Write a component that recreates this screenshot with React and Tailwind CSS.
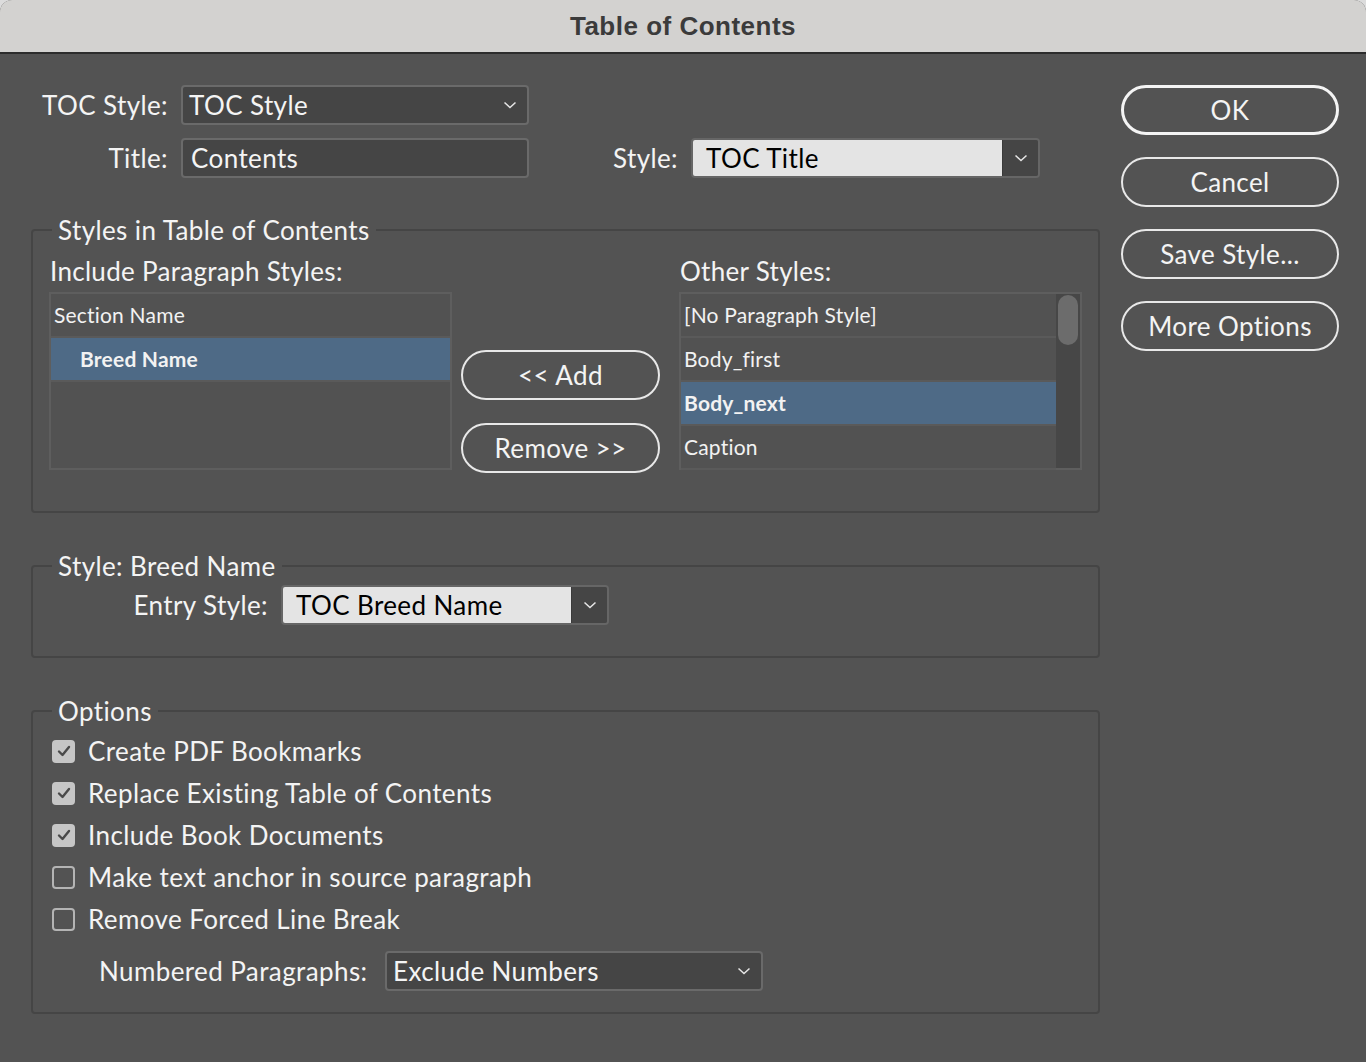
import React from 'react';

const Chevron = ({ className = '' }) => (
    <svg width="14" height="8" viewBox="0 0 14 8" className={className}>
        <polyline points="1.5,1.5 7,6.5 12.5,1.5" fill="none" stroke="#e6e6e6" strokeWidth="1.5" />
    </svg>
);

const DarkSelect = ({ value, width }) => (
    <div className={`${width} h-[40px] flex items-center justify-between rounded-[4px] border-2 border-[#6a6a6a] bg-[#454545] pl-[6px] pr-[10px]`}>
        <span className="text-[26px] tracking-[0.4px] text-[#f4f4f4]">{value}</span>
        <Chevron />
    </div>
);

const LightSelect = ({ value, width }) => (
    <div className={`${width} h-[40px] flex rounded-[4px] border-2 border-[#666] overflow-hidden`}>
        <div className="flex-1 flex items-center bg-[#e4e4e4] pl-[13px] text-[26px] tracking-[0.4px] text-black">{value}</div>
        <div className="w-[36px] flex items-center justify-center bg-[#454545] border-l border-[#3a3a3a]">
            <Chevron />
        </div>
    </div>
);

const PillButton = ({ children, primary, className = '' }) => (
    <div className={`flex items-center justify-center rounded-full text-[26px] tracking-[0.4px] text-[#f4f4f4] ${primary ? 'border-[3px] border-[#f4f4f4]' : 'border-2 border-[#e8e8e8]'} ${className}`}>
        {children}
    </div>
);

const ListBox = ({ rows, scrollbar }) => (
    <div className="w-[403px] h-[178px] flex border-2 border-[#5e5e5e] bg-[#525252]">
        <div className="flex-1 flex flex-col">
            {rows.map((r) => (
                <div
                    key={r.label}
                    className={`h-[44px] shrink-0 flex items-center border-b-2 border-[#5a5a5a] text-[21px] tracking-[0.2px] text-[#f2f2f2] ${r.selected ? 'bg-[#4e6a86] font-bold' : ''} ${r.indent ? 'pl-[29px]' : 'pl-[3px]'}`}
                >
                    {r.label}
                </div>
            ))}
        </div>
        {scrollbar && (
            <div className="w-[24px] bg-[#474747] pt-[1px] px-[2px]">
                <div className="h-[50px] rounded-full bg-[#6c6c6c]" />
            </div>
        )}
    </div>
);

const Checkbox = ({ checked, label }) => (
    <div className="h-[42px] flex items-center gap-[13px] pl-[19px]">
        {checked ? (
            <div className="w-[23px] h-[23px] rounded-[4px] bg-[#c6c6c6] flex items-center justify-center">
                <svg width="14" height="12" viewBox="0 0 14 12">
                    <polyline points="2,6.5 5.5,10 12,2" fill="none" stroke="#4a4a4a" strokeWidth="2.4" strokeLinecap="round" strokeLinejoin="round" />
                </svg>
            </div>
        ) : (
            <div className="w-[23px] h-[23px] rounded-[4px] border-2 border-[#b4b4b4]" />
        )}
        <span className="text-[26px] tracking-[0.4px] text-[#f4f4f4]">{label}</span>
    </div>
);

const Group = ({ title, children, className = '' }) => (
    <fieldset className={`w-[1069px] rounded-[4px] border-2 border-[#454545] ${className}`}>
        <legend className="ml-[19px] px-[6px] text-[26px] leading-[28px] tracking-[0.4px] text-[#f4f4f4]">{title}</legend>
        {children}
    </fieldset>
);

const Label = ({ children, className = '' }) => (
    <span className={`text-[26px] tracking-[0.4px] text-[#f4f4f4] whitespace-nowrap shrink-0 ${className}`}>{children}</span>
);

export default function App() {
    return (
        <div className="w-[1366px] h-[1062px] bg-[#dcdcdc] font-['Lato',sans-serif]">
            <div className="w-full h-full rounded-t-[12px] overflow-hidden bg-[#535353] flex flex-col">
                <div className="h-[54px] shrink-0 flex items-center justify-center bg-[#d3d2d0] border-b-2 border-[#2c2c2c] font-['Liberation_Sans',sans-serif] text-[26px] tracking-[0.5px] font-bold text-[#3b3b3b]">
                    Table of Contents
                </div>

                <div className="flex">
                    <div className="w-[1100px] pl-[31px]">
                        <div className="pt-[31px] flex flex-col gap-[13px]">
                            <div className="flex items-center">
                                <Label className="w-[150px] text-right pr-[13px]">TOC Style:</Label>
                                <DarkSelect value="TOC Style" width="w-[348px]" />
                            </div>
                            <div className="flex items-center">
                                <Label className="w-[150px] text-right pr-[13px]">Title:</Label>
                                <div className="w-[348px] h-[40px] flex items-center rounded-[4px] border-2 border-[#6a6a6a] bg-[#454545] pl-[8px] text-[26px] tracking-[0.4px] text-[#f4f4f4]">
                                    Contents
                                </div>
                                <Label className="w-[162px] text-right pr-[13px]">Style:</Label>
                                <LightSelect value="TOC Title" width="w-[349px]" />
                            </div>
                        </div>

                        <Group title="Styles in Table of Contents" className="mt-[38px]">
                            <div className="flex pl-[16px] pt-[13px] pb-[38px]">
                                <div className="flex flex-col gap-[7px]">
                                    <span className="pl-[1px] text-[26px] leading-[28px] tracking-[0.3px] text-[#f4f4f4]">Include Paragraph Styles:</span>
                                    <ListBox rows={[{ label: 'Section Name' }, { label: 'Breed Name', selected: true, indent: true }]} />
                                </div>
                                <div className="ml-[9px] pt-[93px] flex flex-col gap-[23px]">
                                    <PillButton className="w-[199px] h-[50px]">&lt;&lt; Add</PillButton>
                                    <PillButton className="w-[199px] h-[50px]">Remove &gt;&gt;</PillButton>
                                </div>
                                <div className="ml-[19px] flex flex-col gap-[7px]">
                                    <span className="pl-[1px] text-[26px] leading-[28px] tracking-[0.3px] text-[#f4f4f4]">Other Styles:</span>
                                    <ListBox
                                        scrollbar
                                        rows={[
                                            { label: '[No Paragraph Style]' },
                                            { label: 'Body_first' },
                                            { label: 'Body_next', selected: true },
                                            { label: 'Caption' },
                                        ]}
                                    />
                                </div>
                            </div>
                        </Group>

                        <Group title="Style: Breed Name" className="mt-[39px]">
                            <div className="flex items-center pt-[5px] pb-[31px]">
                                <Label className="w-[248px] text-right pr-[13px]">Entry Style:</Label>
                                <LightSelect value="TOC Breed Name" width="w-[328px]" />
                            </div>
                        </Group>

                        <Group title="Options" className="mt-[39px]">
                            <div className="pt-[5px] pb-[21px]">
                                <Checkbox checked label="Create PDF Bookmarks" />
                                <Checkbox checked label="Replace Existing Table of Contents" />
                                <Checkbox checked label="Include Book Documents" />
                                <Checkbox label="Make text anchor in source paragraph" />
                                <Checkbox label="Remove Forced Line Break" />
                                <div className="mt-[11px] flex items-center pl-[66px]">
                                    <Label className="w-[286px]">Numbered Paragraphs:</Label>
                                    <DarkSelect value="Exclude Numbers" width="w-[378px]" />
                                </div>
                            </div>
                        </Group>
                    </div>

                    <div className="ml-[21px] pt-[31px] flex flex-col gap-[22px]">
                        <PillButton primary className="w-[218px] h-[50px]">OK</PillButton>
                        <PillButton className="w-[218px] h-[50px]">Cancel</PillButton>
                        <PillButton className="w-[218px] h-[50px]">Save Style...</PillButton>
                        <PillButton className="w-[218px] h-[50px]">More Options</PillButton>
                    </div>
                </div>
            </div>
        </div>
    );
}
